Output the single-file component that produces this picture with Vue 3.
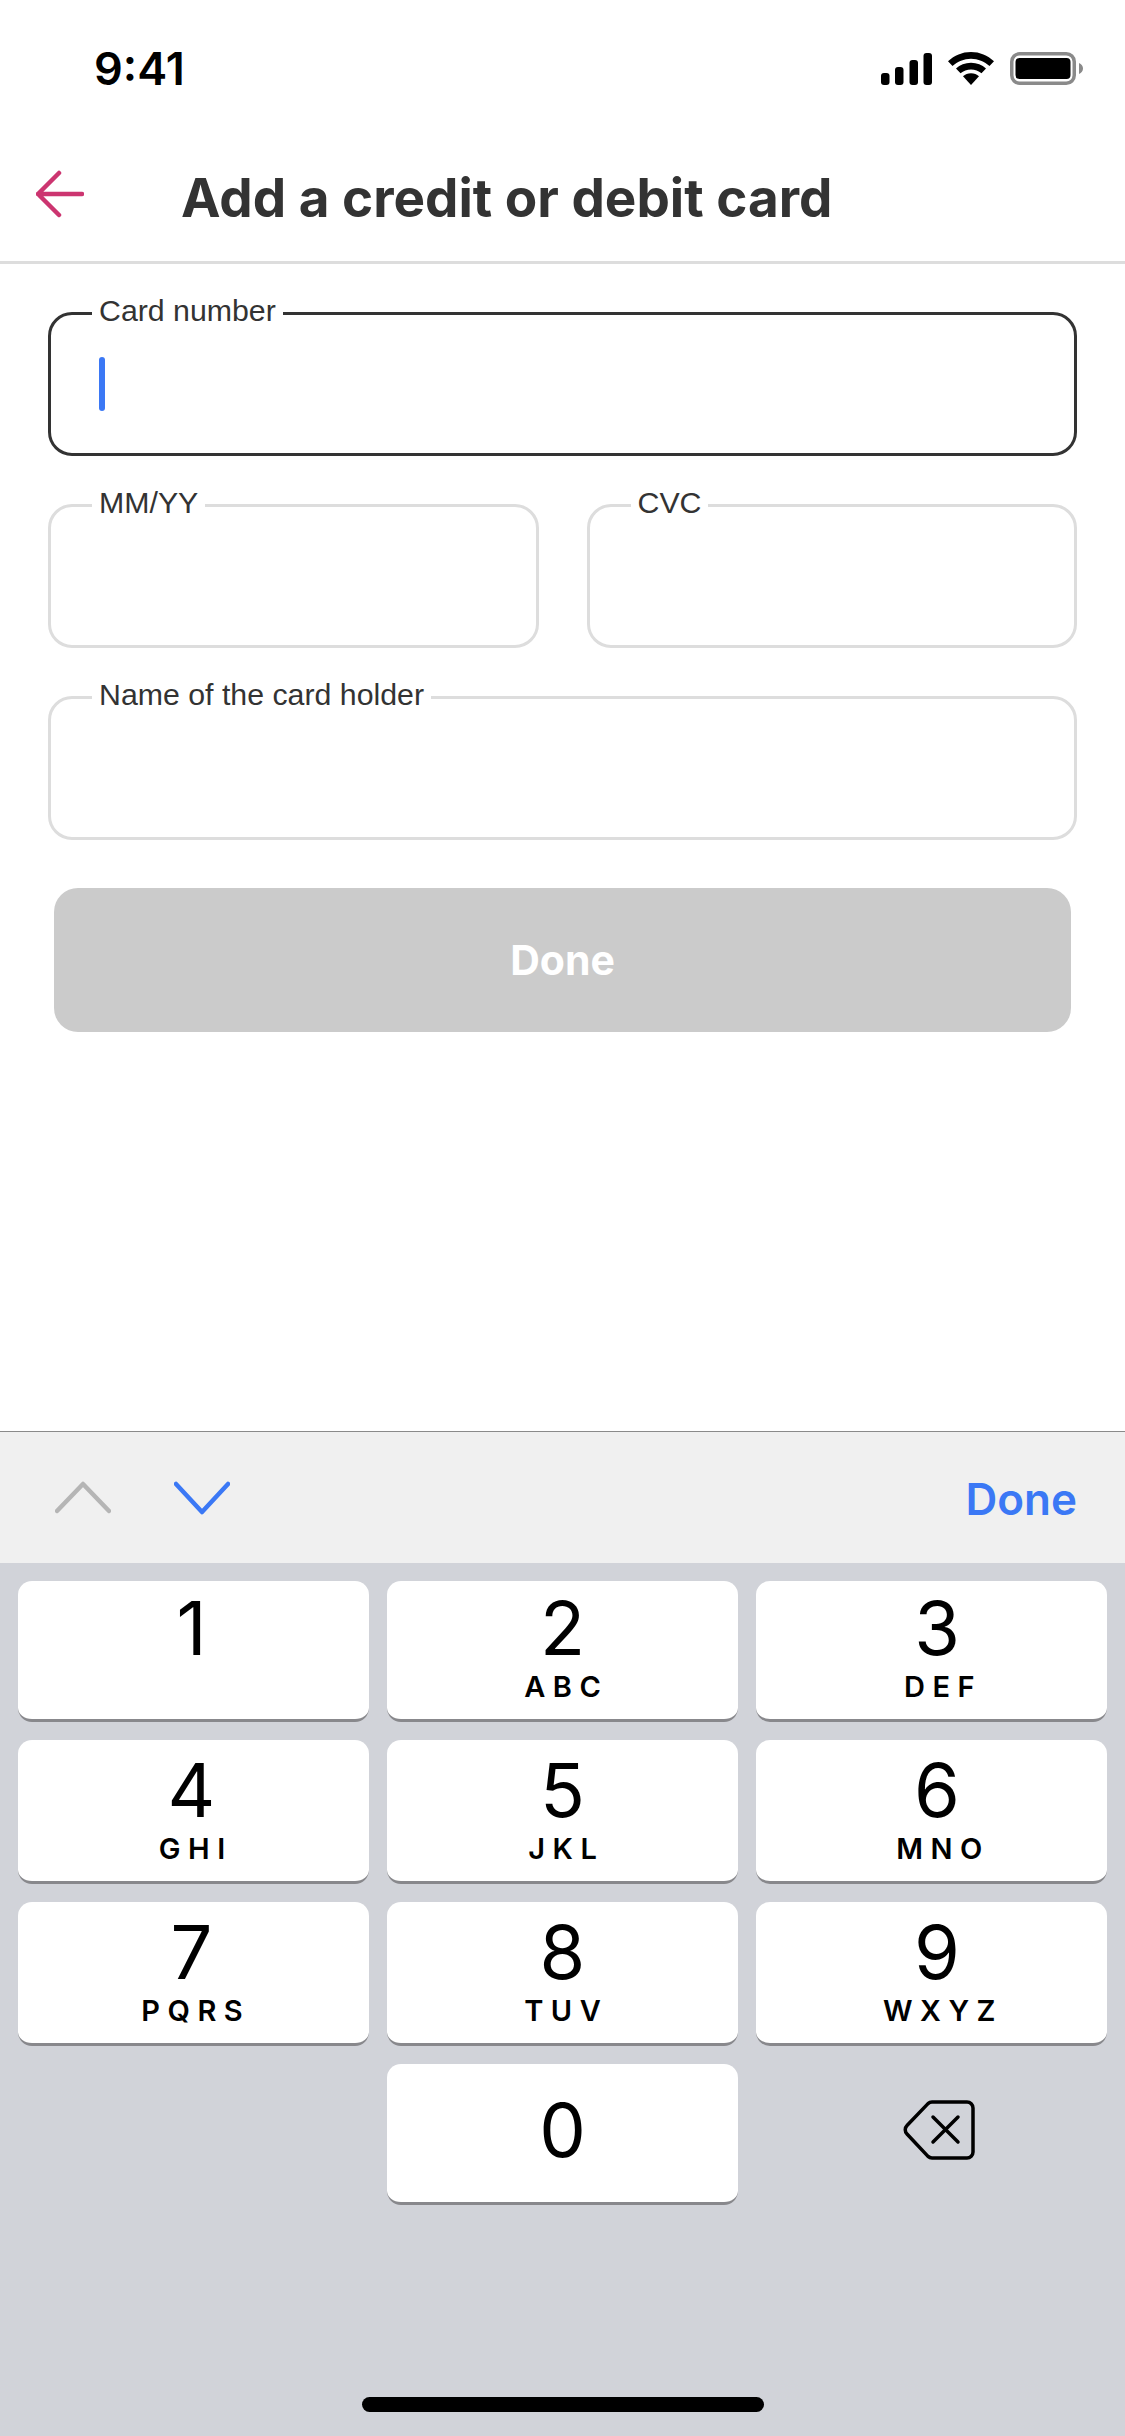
<script setup>
const fields = [
  { label: 'MM/YY' },
  { label: 'CVC' },
]

const keys = [
  { num: '1', sub: '' },
  { num: '2', sub: 'ABC' },
  { num: '3', sub: 'DEF' },
  { num: '4', sub: 'GHI' },
  { num: '5', sub: 'JKL' },
  { num: '6', sub: 'MNO' },
  { num: '7', sub: 'PQRS' },
  { num: '8', sub: 'TUV' },
  { num: '9', sub: 'WXYZ' },
]
</script>

<template>
  <div class="screen">
    <div class="status">
      <span class="time">9:41</span>
      <div class="status-icons">
        <svg width="51" height="33" viewBox="0 0 51 33">
          <rect x="0" y="21" width="8.500" height="12" rx="3" fill="#000" />
          <rect x="14" y="15" width="8.500" height="18" rx="3" fill="#000" />
          <rect x="28.500" y="8" width="8.500" height="25" rx="3" fill="#000" />
          <rect x="42.500" y="1" width="8.500" height="32" rx="3" fill="#000" />
        </svg>
        <svg width="46" height="33" viewBox="0 0 46 33">
          <g transform="scale(1 .97)">
            <path d="M23 0C14 0 6.500 3.500 0 9.500l4.500 5C9.500 10 16 7 23 7s13.500 3 18.500 7.500l4.500-5C39.500 3.500 32 0 23 0z" fill="#000" />
            <path d="M23 11c-6 0-11 2.200-15 6l4.500 5c3-2.700 6.500-4 10.500-4s7.500 1.300 10.500 4l4.500-5c-4-3.800-9-6-15-6z" fill="#000" />
            <path d="M23 22c-3.200 0-5.800 1-8 3l8 9 8-9c-2.200-2-4.800-3-8-3z" fill="#000" />
          </g>
        </svg>
        <svg width="73" height="33" viewBox="0 0 73 33">
          <rect x="1.750" y="1.750" width="62.500" height="29.500" rx="8" fill="none" stroke="#8a8a8a" stroke-width="3.500" />
          <rect x="5.500" y="6" width="55" height="21" rx="4" fill="#000" />
          <path d="M69 11c2.500 1 4 3 4 5.500S71.500 21 69 22z" fill="#8a8a8a" />
        </svg>
      </div>
    </div>

    <div class="header">
      <svg class="back" width="48" height="48" viewBox="0 0 48 48">
        <path d="M23 3 2 24l21 21M2 24h44" fill="none" stroke="#cc3570" stroke-width="4.500" stroke-linecap="round" stroke-linejoin="round" />
      </svg>
      <h1>Add a credit or debit card</h1>
    </div>

    <div class="form">
      <div class="field active">
        <span class="label">Card number</span>
        <span class="caret"></span>
      </div>
      <div class="row">
        <div v-for="f in fields" :key="f.label" class="field">
          <span class="label">{{ f.label }}</span>
        </div>
      </div>
      <div class="field">
        <span class="label">Name of the card holder</span>
      </div>
      <button class="submit">Done</button>
    </div>

    <div class="spacer"></div>

    <div class="toolbar">
      <svg class="arrow" width="56" height="34" viewBox="0 0 56 34">
        <path d="M2 30 28 3l26 27" fill="none" stroke="#b5b5b5" stroke-width="4.500" stroke-linecap="round" stroke-linejoin="round" />
      </svg>
      <svg class="arrow down" width="56" height="34" viewBox="0 0 56 34">
        <path d="M2 3l26 28L54 3" fill="none" stroke="#3b78f5" stroke-width="4.500" stroke-linecap="round" stroke-linejoin="round" />
      </svg>
      <span class="toolbar-done">Done</span>
    </div>

    <div class="keyboard">
      <div class="keys">
        <div v-for="k in keys" :key="k.num" class="key">
          <span class="num">{{ k.num }}</span>
          <span class="sub">{{ k.sub }}</span>
        </div>
        <div class="key-empty"></div>
        <div class="key zero">
          <span class="num">0</span>
        </div>
        <div class="key-empty backspace">
          <svg width="72" height="62" viewBox="0 0 72 62">
            <path d="M29 3h35a6 6 0 0 1 6 6v44a6 6 0 0 1-6 6H29a6 6 0 0 1-4-1.600L4 35a6 6 0 0 1 0-8.500L25 4.600A6 6 0 0 1 29 3z" fill="none" stroke="#000" stroke-width="3.500" stroke-linejoin="round" />
            <path d="M30 18l25 25M55 18 30 43" fill="none" stroke="#000" stroke-width="3.500" stroke-linecap="round" />
          </svg>
        </div>
      </div>
      <div class="home-bar"></div>
    </div>
  </div>
</template>

<style scoped>
.screen {
  width: 1125px;
  height: 2436px;
  display: flex;
  flex-direction: column;
  background: #fff;
  font-family: "Liberation Sans", Arial, sans-serif;
  overflow: hidden;
}

.status {
  height: 132px;
  box-sizing: border-box;
  padding: 51px 42px 0 94px;
  display: flex;
  justify-content: space-between;
  align-items: flex-start;
}

.time {
  font-family: Inter, sans-serif;
  font-size: 45px;
  font-weight: 600;
  line-height: 36px;
  color: #000;
}

.status-icons {
  display: flex;
  align-items: center;
  gap: 16px;
  padding-top: 1px;
}

.header {
  height: 132px;
  box-sizing: border-box;
  border-bottom: 3px solid #ddd;
  display: flex;
  align-items: flex-start;
  padding: 38px 0 0 36px;
}

.back {
  flex: none;
}

h1 {
  margin: 2px 0 0 97px;
  font-family: Inter, sans-serif;
  font-size: 53px;
  font-weight: 700;
  line-height: 52px;
  color: #333;
  white-space: nowrap;
}

.form {
  padding: 48px 48px 0;
  display: flex;
  flex-direction: column;
  gap: 48px;
}

.row {
  display: flex;
  gap: 48px;
}

.row .field {
  flex: 1;
}

.field {
  position: relative;
  height: 144px;
  box-sizing: border-box;
  border: 3px solid #ddd;
  border-radius: 24px;
}

.field.active {
  border-color: #333;
}

.label {
  position: absolute;
  top: -22px;
  left: 41px;
  padding: 0 7px;
  background: #fff;
  font-size: 30.300px;
  line-height: 36px;
  color: #333;
  white-space: nowrap;
}

.caret {
  position: absolute;
  left: 48px;
  top: 42px;
  width: 6px;
  height: 54px;
  border-radius: 3px;
  background: #3b78f5;
}

.submit {
  margin: 0 6px;
  height: 144px;
  border: none;
  border-radius: 24px;
  background: #cbcbcb;
  color: #fff;
  font-family: Inter, sans-serif;
  font-size: 41px;
  font-weight: 700;
}

.spacer {
  flex: 1;
}

.toolbar {
  height: 132px;
  box-sizing: border-box;
  border-top: 1px solid #8a8a8a;
  background: #f0f0f0;
  display: flex;
  align-items: center;
  padding: 0 48px 0 55px;
}

.arrow {
  flex: none;
}

.arrow.down {
  margin-left: 63px;
}

.toolbar-done {
  margin-left: auto;
  margin-top: 2px;
  font-family: Inter, sans-serif;
  font-size: 44px;
  font-weight: 600;
  color: #3b78f5;
}

.keyboard {
  position: relative;
  height: 873px;
  box-sizing: border-box;
  padding: 18px 18px 0;
  background: #d1d3d9;
}

.keys {
  display: grid;
  grid-template-columns: repeat(3, 351px);
  grid-template-rows: 141px 144px 144px 141px;
  gap: 18px;
}

.key {
  box-sizing: border-box;
  border-radius: 14px;
  background: #fff;
  border-bottom: 3px solid #88888c;
  display: flex;
  flex-direction: column;
  align-items: center;
  font-family: Inter, sans-serif;
  color: #000;
}

/* the third column sits a bit right of centre in the reference */
.key:nth-child(3n) {
  padding-left: 11px;
}

.key:nth-child(3n) .sub {
  padding-left: 12px;
}

.key:nth-child(3n + 1) .num {
  margin-right: 4px;
}

.key:nth-child(3n + 1) .sub {
  margin-right: 3px;
}

.num {
  font-size: 74px;
  font-weight: 400;
  line-height: 60px;
  margin-top: 20px;
}

.key:nth-child(-n + 3) .num {
  margin-top: 17px;
}

.sub {
  font-size: 29px;
  font-weight: 600;
  line-height: 30px;
  letter-spacing: 7.500px;
  margin-top: 14px;
  padding-left: 7.500px;
}

.zero .num {
  margin-top: 36px;
}

.backspace {
  display: flex;
  align-items: center;
  justify-content: center;
  padding: 0 0 10px 14px;
}

.home-bar {
  position: absolute;
  left: 362px;
  bottom: 24px;
  width: 402px;
  height: 15px;
  border-radius: 8px;
  background: #000;
}
</style>
